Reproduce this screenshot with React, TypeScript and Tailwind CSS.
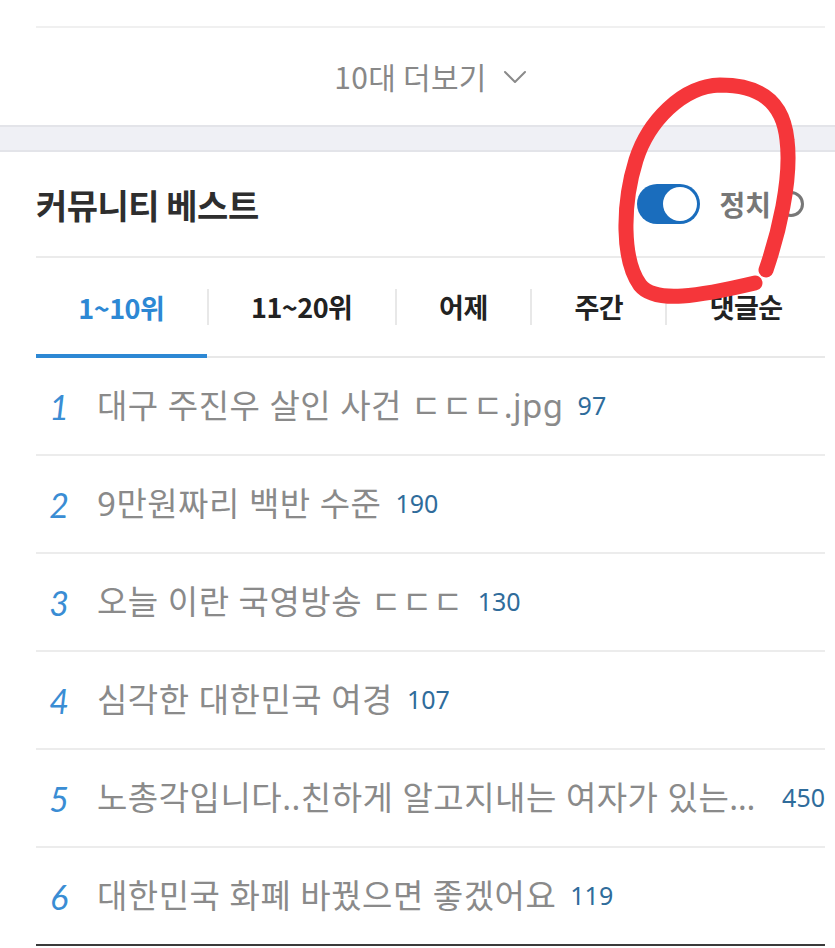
import React, { useState } from "react";

interface Post {
    rank: number;
    title: string;
    comments: number;
}

const posts: Post[] = [
    { rank: 1, title: "대구 주진우 살인 사건 ㄷㄷㄷ.jpg", comments: 97 },
    { rank: 2, title: "9만원짜리 백반 수준", comments: 190 },
    { rank: 3, title: "오늘 이란 국영방송 ㄷㄷㄷ", comments: 130 },
    { rank: 4, title: "심각한 대한민국 여경", comments: 107 },
    {
        rank: 5,
        title: "노총각입니다..친하게 알고지내는 여자가 있는데요 어떻게 해야 할까요",
        comments: 450,
    },
    { rank: 6, title: "대한민국 화폐 바꿨으면 좋겠어요", comments: 119 },
];

const tabs = ["1~10위", "11~20위", "어제", "주간", "댓글순"];

const App: React.FC = () => {
    const [activeTab, setActiveTab] = useState(0);
    const [politics, setPolitics] = useState(true);

    return (
        <div className="relative min-h-[948px] w-full overflow-hidden bg-white font-['Noto_Sans_CJK_KR',sans-serif]">
            {/* previous section: more button */}
            <div className="pl-[36px] pr-[10px] pt-[26px]">
                <div className="border-t-2 border-[#f0f0f0]" />
                <button className="flex h-[97px] w-full items-center justify-center gap-[16px] text-[30px] tracking-[0.3px] text-[#888888]">
                    <span>10대 더보기</span>
                    <svg width="24" height="14" viewBox="0 0 24 14" fill="none">
                        <polyline
                            points="2,2 12,12 22,2"
                            stroke="#8a8a8a"
                            strokeWidth="2"
                            strokeLinecap="round"
                            strokeLinejoin="round"
                        />
                    </svg>
                </button>
            </div>

            <div className="h-[27px] border-y-2 border-[#e3e4e9] bg-[#eff0f5]" />

            {/* community best */}
            <div className="pl-[36px] pr-[10px]">
                <div className="flex h-[106px] items-center justify-between border-b-2 border-[#ebebeb] pr-[20px]">
                    <h2 className="text-[34px] font-bold tracking-[-0.5px] text-[#2e2e2e]">
                        커뮤니티 베스트
                    </h2>
                    <div className="flex items-center">
                        <button
                            onClick={() => setPolitics(!politics)}
                            className="ml-[2px] flex h-[40px] w-[63px] items-center justify-end rounded-full bg-[#1a6dbd] p-[3px]"
                        >
                            <span className="h-[34px] w-[34px] rounded-full bg-white" />
                        </button>
                        <span className="ml-[19px] text-[28px] font-bold text-[#777777]">
                            정치
                        </span>
                        <svg className="ml-[6px]" width="28" height="28" viewBox="0 0 28 28" fill="none">
                            <circle cx="14" cy="14" r="11.5" stroke="#777777" strokeWidth="3" />
                        </svg>
                    </div>
                </div>

                <div className="flex h-[100px] items-stretch border-b-2 border-[#e8e8e8]">
                    {tabs.map((tab, i) => (
                        <React.Fragment key={tab}>
                            {i > 0 && (
                                <div className="h-[36px] w-[2px] shrink-0 self-center bg-[#e8e8e8]" />
                            )}
                            <button
                                onClick={() => setActiveTab(i)}
                                className={
                                    i === activeTab
                                        ? "-mb-[2px] flex flex-auto items-center justify-center border-b-4 border-[#2d88d4] pt-[4px] text-[27px] font-bold tracking-[-0.5px] text-[#2d88d4]"
                                        : "flex flex-auto items-center justify-center text-[27px] font-bold tracking-[-0.5px] text-[#222222]"
                                }
                            >
                                {tab}
                            </button>
                        </React.Fragment>
                    ))}
                </div>

                <ul>
                    {posts.map((post) => (
                        <li
                            key={post.rank}
                            className="flex h-[98px] items-center border-b-2 border-[#ececec] last:border-[#3a3a3a]"
                        >
                            <span className="w-[46px] shrink-0 text-center font-['Lato',sans-serif] text-[34px] italic text-[#3a8dd4]">
                                {post.rank}
                            </span>
                            <span className="ml-[15px] min-w-0 truncate font-['Noto_Sans','Noto_Sans_CJK_KR',sans-serif] text-[33px] tracking-[0.5px] text-[#8a8a8a]">
                                {post.title}
                            </span>
                            <span className="ml-[14px] shrink-0 font-['Noto_Sans',sans-serif] text-[25px] text-[#2f6c9b]">
                                {post.comments}
                            </span>
                        </li>
                    ))}
                </ul>
            </div>

            {/* hand-drawn annotation */}
            <svg
                className="pointer-events-none absolute left-0 top-0"
                width="835"
                height="948"
                viewBox="0 0 835 948"
                fill="none"
            >
                <path
                    d="M766 270 C778 235, 792 180, 787 140 C783 100, 758 85, 720 85 C682 86, 648 122, 636 160 C622 205, 622 260, 640 285 C655 304, 700 296, 755 283"
                    stroke="#f5363a"
                    strokeWidth="15"
                    strokeLinecap="round"
                    strokeLinejoin="round"
                />
            </svg>
        </div>
    );
};

export default App;
